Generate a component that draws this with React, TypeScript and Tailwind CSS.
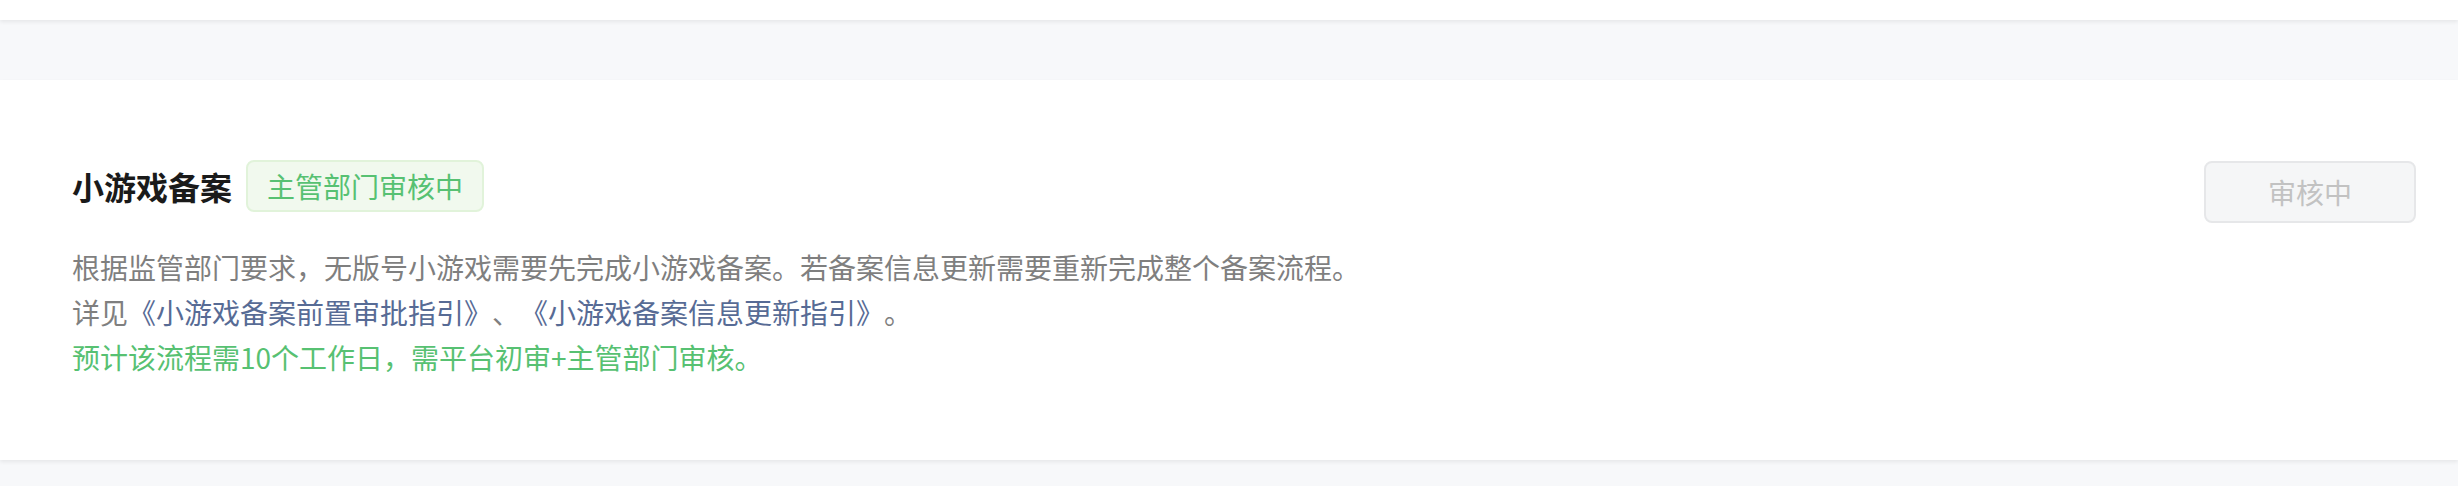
import React from 'react';

const FONT = { fontFamily: '"Noto Sans CJK SC", "Noto Sans", sans-serif' };

export default function App() {
  return (
    <div className="min-h-[486px] w-full bg-[#f7f8fa] [text-spacing-trim:space-all]" style={FONT}>
      {/* previous card, bottom edge only */}
      <div className="relative z-10 h-[20px] bg-white shadow-[0_2px_4px_rgba(0,0,0,0.07)]" />
      <div className="h-[60px]" />

      {/* filing card */}
      <div className="relative z-10 flex items-start justify-between bg-white pb-[80px] pl-[72px] pr-[42px] pt-[80px] shadow-[0_2px_4px_rgba(0,0,0,0.07)]">
        <div>
          <div className="flex h-[52px] items-center">
            <h3 className="text-[32px] font-semibold leading-none text-[#1a1a1a]">小游戏备案</h3>
            <span className="ml-[14px] flex h-[52px] items-center rounded-[8px] border-2 border-[#e1f3da] bg-[#f1f9ee] px-[19px] text-[28px] leading-none text-[#57c172]">
              主管部门审核中
            </span>
          </div>
          <div className="mt-[33px] text-[28px] leading-[45px] text-[#7f7f7f]">
            <p>根据监管部门要求，无版号小游戏需要先完成小游戏备案。若备案信息更新需要重新完成整个备案流程。</p>
            <p>
              详见<a className="text-[#576b95]">《小游戏备案前置审批指引》</a>、<a className="text-[#576b95]">《小游戏备案信息更新指引》</a>。
            </p>
            <p className="text-[#57c172]">预计该流程需10个工作日，需平台初审+主管部门审核。</p>
          </div>
        </div>

        <button
          disabled
          className="mt-[1px] flex h-[62px] w-[212px] items-center justify-center rounded-[8px] border-2 border-[#e6e7e9] bg-[#f5f6f7] text-[28px] text-[#c2c2c2]"
        >
          审核中
        </button>
      </div>
    </div>
  );
}
